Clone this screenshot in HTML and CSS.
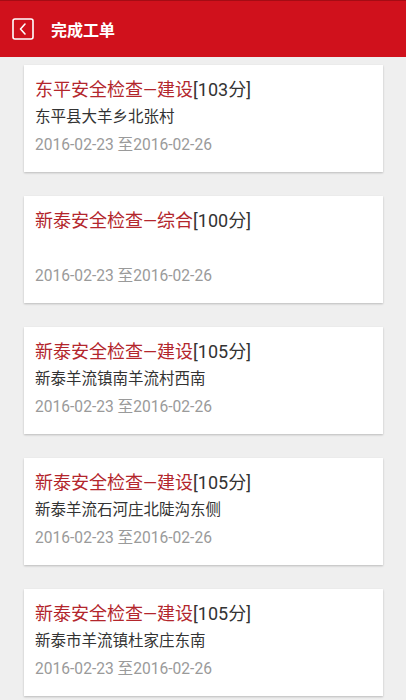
FILE: index.html
```html
<!DOCTYPE html>
<html lang="zh-CN">
<head>
<meta charset="UTF-8">
<meta name="viewport" content="width=device-width, initial-scale=1.0">
<title>完成工单</title>
<link rel="stylesheet" href="styles.css">
</head>
<body>
<div class="header">
    <div class="back">
        <svg width="22" height="22" viewBox="0 0 22 22">
            <rect x="1" y="1" width="20" height="20" rx="2" fill="none" stroke="#fff" stroke-width="1.6"/>
            <path d="M13 6 L8.5 11 L13 16" fill="none" stroke="#fff" stroke-width="1.6" stroke-linecap="round" stroke-linejoin="round"/>
        </svg>
    </div>
    <div class="title">完成工单</div>
</div>

<div class="list">
    <div class="card">
        <div class="name"><span class="red">东平安全检查—建设</span>[103分]</div>
        <div class="addr">东平县大羊乡北张村</div>
        <div class="date">2016-02-23 至2016-02-26</div>
    </div>
    <div class="card">
        <div class="name"><span class="red">新泰安全检查—综合</span>[100分]</div>
        <div class="addr"></div>
        <div class="date">2016-02-23 至2016-02-26</div>
    </div>
    <div class="card">
        <div class="name"><span class="red">新泰安全检查—建设</span>[105分]</div>
        <div class="addr">新泰羊流镇南羊流村西南</div>
        <div class="date">2016-02-23 至2016-02-26</div>
    </div>
    <div class="card">
        <div class="name"><span class="red">新泰安全检查—建设</span>[105分]</div>
        <div class="addr">新泰羊流石河庄北陡沟东侧</div>
        <div class="date">2016-02-23 至2016-02-26</div>
    </div>
    <div class="card">
        <div class="name"><span class="red">新泰安全检查—建设</span>[105分]</div>
        <div class="addr">新泰市羊流镇杜家庄东南</div>
        <div class="date">2016-02-23 至2016-02-26</div>
    </div>
</div>
</body>
</html>
```

FILE: styles.css
```css
body {
    margin: 0;
    background-color: #efefef;
    font-family: Roboto, "Noto Sans CJK SC", sans-serif;
}

.header {
    height: 56px;
    background-color: #d0111c;
    border-top: 1px solid #a50c14;
    display: flex;
    align-items: center;
    padding-left: 12px;
    gap: 17px;
}
.back {
    display: flex;
    align-items: center;
}
.title {
    color: white;
    font-size: 16px;
    font-weight: bold;
}

.list {
    display: flex;
    flex-direction: column;
    gap: 24px;
    padding: 8px 23px 24px 24px;
}

.card {
    background-color: white;
    height: 107px;
    box-sizing: border-box;
    padding: 11px 11px 0 11px;
    box-shadow: 0 1px 2px rgba(0, 0, 0, 0.22);
}
.name {
    font-size: 18px;
    line-height: 27px;
    color: #333;
}
.red {
    color: #b3262c;
}
.addr {
    font-size: 15.5px;
    line-height: 28px;
    height: 28px;
    color: #333;
}
.date {
    font-size: 15.6px;
    line-height: 28px;
    color: #9a9a9a;
}
```
